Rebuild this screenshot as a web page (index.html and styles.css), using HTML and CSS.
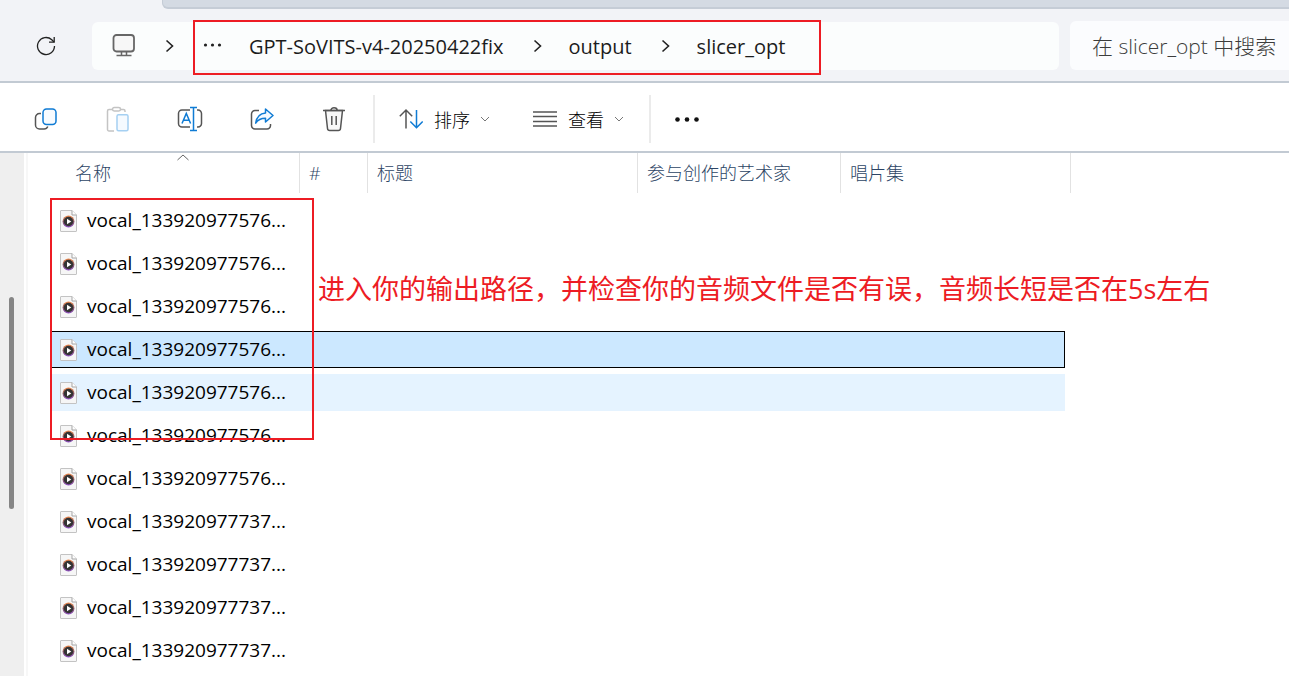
FILE: index.html
```html
<!DOCTYPE html>
<html lang="zh-CN">

<head>
    <meta charset="UTF-8">
    <meta name="viewport" content="width=device-width, initial-scale=1.0">
    <title>slicer_opt</title>
    <link rel="stylesheet" href="styles.css">
</head>

<body>
    <svg class="defs" aria-hidden="true">
        <defs>
            <linearGradient id="ring" x1="0" y1="0" x2="0" y2="1">
                <stop offset="0" stop-color="#f08a4b" />
                <stop offset="0.5" stop-color="#8a5a66" />
                <stop offset="1" stop-color="#8a4fc0" />
            </linearGradient>
            <symbol id="file" viewBox="0 0 17 22">
                <path d="M1 .5h11l4.500 4.500V21a.5.5 0 0 1-.5.5H1a.5.5 0 0 1-.5-.5V1A.5.5 0 0 1 1 .5z" fill="#f6f6f6" stroke="#c3c3c3" />
                <path d="M12 .5V5h4.500" fill="#fff" stroke="#a5a5a5" />
                <circle cx="8.500" cy="11.500" r="5.900" fill="url(#ring)" />
                <circle cx="8.500" cy="11.500" r="4.700" fill="#333" />
                <path d="M7 8.800v5.400l4.300-2.700z" fill="#fff" />
            </symbol>
            <symbol id="next" viewBox="0 0 9 14">
                <path d="M1.500 1.500L7.500 7l-6 5.500" fill="none" stroke="#222" stroke-width="1.600" />
            </symbol>
            <symbol id="down" viewBox="0 0 12 12">
                <path d="M2 4l4 4 4-4" fill="none" stroke="#777" />
            </symbol>
        </defs>
    </svg>

    <div class="tabs">
        <div class="tabs-rest"></div>
    </div>

    <header class="nav">
        <button class="refresh" aria-label="刷新">
            <svg width="20" height="20" viewBox="0 0 20 20" fill="none" stroke="#222" stroke-width="1.300">
                <path d="M18.500 10A8.500 8.500 0 1 1 15.800 3.800L18 6" />
                <path d="M18.200 1v5.200H13" />
            </svg>
        </button>
        <nav class="address">
            <svg width="26" height="24" viewBox="0 0 26 24" fill="none" stroke="#666" stroke-width="1.800">
                <rect x="1.500" y="1" width="20.500" height="16.500" rx="3" fill="#f7f7f7" />
                <path d="M9.500 17.500v4M14.500 17.500v4" stroke-width="1.500" />
                <path d="M4.500 21.500h15" stroke-width="1.500" />
            </svg>
            <svg class="next"><use href="#next" /></svg>
            <button class="crumb-more" aria-label="更多">
                <svg width="21" height="6" viewBox="0 0 21 6" fill="#222">
                    <circle cx="4.500" cy="2" r="1.600" />
                    <circle cx="11.500" cy="2" r="1.600" />
                    <circle cx="18.500" cy="2" r="1.600" />
                </svg>
            </button>
            <a href="#">GPT-SoVITS-v4-20250422fix</a>
            <svg class="next"><use href="#next" /></svg>
            <a href="#">output</a>
            <svg class="next"><use href="#next" /></svg>
            <a href="#">slicer_opt</a>
            <div class="mark mark-path"></div>
        </nav>
        <input class="search" type="text" aria-label="搜索" placeholder="在 slicer_opt 中搜索">
    </header>

    <div class="toolbar">
        <div class="tools">
            <button aria-label="复制">
                <svg width="24" height="24" viewBox="0 0 24 24" fill="none" stroke-width="1.500">
                    <path d="M7 6.500H5.500a4 4 0 0 0-4 4V18a4 4 0 0 0 4 4H10a4 4 0 0 0 3.800-2.500" stroke="#555" />
                    <rect x="9" y="2" width="13" height="15.500" rx="3.500" fill="#f7fbff" stroke="#0f7bd4" />
                </svg>
            </button>
            <button aria-label="粘贴" disabled>
                <svg width="24" height="26" viewBox="0 0 24 26" fill="none" stroke-width="1.500">
                    <path d="M6.500 3.500H3A1.500 1.500 0 0 0 1.500 5v18.500A1.500 1.500 0 0 0 3 25h5M14.500 3.500h3A1.500 1.500 0 0 1 19 5v1" stroke="#c4c4c4" />
                    <rect x="6.500" y="1.500" width="8" height="3.500" rx="1.700" stroke="#c4c4c4" />
                    <rect x="11" y="8.800" width="11" height="16" rx="1.500" fill="#f5faff" stroke="#a5d0f2" />
                </svg>
            </button>
            <button aria-label="重命名">
                <svg width="26" height="26" viewBox="0 0 26 26" fill="none" stroke-width="1.500">
                    <path d="M13 4H5a3.500 3.500 0 0 0-3.500 3.500v10A3.500 3.500 0 0 0 5 21h8M20 4h1a3.500 3.500 0 0 1 3.500 3.500v10A3.500 3.500 0 0 1 21 21h-1" stroke="#555" />
                    <path d="M5 17.500L9.300 7.500l4.300 10M6.500 14.200h5.600" stroke="#0f7bd4" />
                    <path d="M13 1.500h7M13 24.500h7M16.500 1.500v23" stroke="#0f7bd4" />
                </svg>
            </button>
            <button aria-label="共享">
                <svg width="24" height="24" viewBox="0 0 24 24" fill="none" stroke-width="1.500" stroke-linejoin="round">
                    <path d="M9 3.500H5A3.500 3.500 0 0 0 1.500 7v11.500A3.500 3.500 0 0 0 5 22h12a3.500 3.500 0 0 0 3.500-3.500V17" stroke="#555" />
                    <path d="M15.500 2l7.500 6.500-7.500 6.500v-3.800c-4.500 0-7.500 1.300-9.800 5C6.500 10.500 9.500 6.500 15.500 6z" fill="#f3f9ff" stroke="#0f7bd4" />
                </svg>
            </button>
            <button aria-label="删除">
                <svg width="24" height="26" viewBox="0 0 24 26" fill="none" stroke="#555" stroke-width="1.500">
                    <path d="M3.500 4.500l2 18A2.200 2.200 0 0 0 7.700 24.500h8.600a2.200 2.200 0 0 0 2.200-2l2-18z" fill="#f8f8f8" />
                    <path d="M1 4.500h22M8.800 4.500a3.200 2.700 0 0 1 6.400 0M9.800 10v9M14.200 10v9" />
                </svg>
            </button>
        </div>
        <div class="divider"></div>
        <button class="menu">
            <svg width="24" height="22" viewBox="0 0 24 22" fill="none" stroke-width="1.500">
                <path d="M7 20.500V2M.8 8.200L7 2l6.200 6.200" stroke="#555" />
                <path d="M17.500 2v17.500M11.300 13.500l6.200 6.200 6.200-6.200" stroke="#0f7bd4" />
            </svg>
            <span>排序</span>
            <svg class="down"><use href="#down" /></svg>
        </button>
        <button class="menu">
            <svg width="24" height="18" viewBox="0 0 24 18" stroke="#555" stroke-width="1.400">
                <path d="M0 2h24M0 6.500h24M0 11.500h24M0 16h24" />
            </svg>
            <span>查看</span>
            <svg class="down"><use href="#down" /></svg>
        </button>
        <div class="divider"></div>
        <button class="menu" aria-label="查看更多">
            <svg width="24" height="6" viewBox="0 0 24 6" fill="#111">
                <circle cx="2.500" cy="3.500" r="2.300" />
                <circle cx="12" cy="3.500" r="2.300" />
                <circle cx="21.500" cy="3.500" r="2.300" />
            </svg>
        </button>
    </div>

    <main class="content">
        <aside class="side">
            <div class="thumb"></div>
        </aside>
        <section class="files">
            <table>
                <colgroup>
                    <col class="c-name">
                    <col class="c-num">
                    <col class="c-title">
                    <col class="c-artist">
                    <col class="c-album">
                </colgroup>
                <thead>
                    <tr>
                        <th class="first">
                            <div>名称</div>
                            <svg class="sorted" width="12" height="7" viewBox="0 0 12 7" fill="none" stroke="#666">
                                <path d="M.5 6L6 1l5.500 5" />
                            </svg>
                        </th>
                        <th><div>#</div></th>
                        <th><div>标题</div></th>
                        <th><div>参与创作的艺术家</div></th>
                        <th><div>唱片集</div></th>
                    </tr>
                </thead>
                <tbody>
                    <tr><td><div class="name"><svg><use href="#file" /></svg>vocal_133920977576...</div></td><td></td><td></td><td></td><td></td></tr>
                    <tr><td><div class="name"><svg><use href="#file" /></svg>vocal_133920977576...</div></td><td></td><td></td><td></td><td></td></tr>
                    <tr><td><div class="name"><svg><use href="#file" /></svg>vocal_133920977576...</div></td><td></td><td></td><td></td><td></td></tr>
                    <tr class="selected"><td><div class="name"><svg><use href="#file" /></svg>vocal_133920977576...</div></td><td></td><td></td><td></td><td></td></tr>
                    <tr class="hovered"><td><div class="name"><svg><use href="#file" /></svg>vocal_133920977576...</div></td><td></td><td></td><td></td><td></td></tr>
                    <tr><td><div class="name"><svg><use href="#file" /></svg>vocal_133920977576...</div></td><td></td><td></td><td></td><td></td></tr>
                    <tr><td><div class="name"><svg><use href="#file" /></svg>vocal_133920977576...</div></td><td></td><td></td><td></td><td></td></tr>
                    <tr><td><div class="name"><svg><use href="#file" /></svg>vocal_133920977737...</div></td><td></td><td></td><td></td><td></td></tr>
                    <tr><td><div class="name"><svg><use href="#file" /></svg>vocal_133920977737...</div></td><td></td><td></td><td></td><td></td></tr>
                    <tr><td><div class="name"><svg><use href="#file" /></svg>vocal_133920977737...</div></td><td></td><td></td><td></td><td></td></tr>
                    <tr><td><div class="name"><svg><use href="#file" /></svg>vocal_133920977737...</div></td><td></td><td></td><td></td><td></td></tr>
                </tbody>
            </table>
            <div class="mark mark-files"></div>
            <p class="note">进入你的输出路径，并检查你的音频文件是否有误，音频长短是否在5s左右</p>
        </section>
    </main>
</body>

</html>
```
FILE: styles.css
```css
* {
    box-sizing: border-box;
}

body {
    margin: 0;
    min-height: 100vh;
    padding-bottom: 8px;
    display: flex;
    flex-direction: column;
    overflow: hidden;
    background-color: #fff;
    color: #111;
    font-family: "Open Sans", "Noto Sans CJK SC", sans-serif;
    font-size: 18px;
}

button {
    display: flex;
    align-items: center;
    justify-content: center;
    padding: 0;
    border: none;
    background: none;
    color: inherit;
    font: inherit;
}

svg {
    display: block;
    flex-shrink: 0;
}

.defs {
    position: absolute;
    width: 0;
    height: 0;
}

/* top of the window */
.tabs {
    padding-left: 162px;
    background-color: #f2f3f7;
}

.tabs-rest {
    height: 9px;
    background-color: #d4dae3;
    border-left: 1px solid #c5ccd6;
    border-bottom: 2px solid #c5ccd6;
    border-bottom-left-radius: 6px;
}

.nav {
    display: flex;
    height: 74px;
    padding: 12px 0 11px;
    background-color: #f2f3f7;
    border-bottom: 2px solid #c2cad3;
}

.refresh {
    width: 92px;
}

.address {
    position: relative;
    flex: 1;
    display: flex;
    align-items: center;
    gap: 27px;
    margin: 1px 11px 0 0;
    padding-left: 20px;
    background-color: #fbfdfd;
    border-radius: 6px;
    font-size: 20px;
}

.address a {
    padding-right: 2px;
    color: #1c1c1c;
    text-decoration: none;
}

.next {
    width: 9px;
    height: 14px;
}

.search {
    width: 219px;
    padding: 0 0 0 22px;
    border: none;
    border-radius: 6px 0 0 6px;
    background-color: #fbfcfe;
    font: inherit;
    font-size: 21px;
    font-weight: 300;
}

.search::placeholder {
    color: #3c3c3c;
}

/* commands */
.toolbar {
    display: flex;
    align-items: center;
    height: 70px;
    padding: 4px 0 0 22px;
    border-bottom: 2px solid #c2cad3;
}

.tools {
    display: flex;
    gap: 24px;
    margin-right: 12px;
}

.tools button {
    width: 48px;
    height: 48px;
}

.divider {
    width: 2px;
    height: 48px;
    margin: 0 3px;
    background-color: #ebebeb;
}

.menu {
    height: 48px;
    padding: 0 21px;
    font-weight: 300;
    color: #000;
}

.menu span {
    margin: 0 9px 0 11px;
}

.down {
    width: 12px;
    height: 12px;
}

/* file list */
.content {
    flex: 1;
    display: flex;
}

.side {
    width: 24px;
    padding: 144px 0 0 9px;
    background-color: #efefef;
}

.thumb {
    width: 5px;
    height: 212px;
    border-radius: 3px;
    background-color: #858585;
}

.files {
    position: relative;
    flex: 1;
    margin-left: 2px;
    padding-left: 22px;
    border-left: 2px solid #f7f7f7;
}

table {
    width: 1021px;
    table-layout: fixed;
    border-spacing: 0;
}

.c-name {
    width: 250px;
}

.c-num {
    width: 68px;
}

.c-title {
    width: 270px;
}

.c-artist {
    width: 203px;
}

.c-album {
    width: 230px;
}

th {
    position: relative;
    height: 46px;
    padding: 0;
    vertical-align: top;
    text-align: left;
    font-weight: 300;
    color: #2c4464;
}

th div {
    height: 40px;
    padding-left: 9px;
    border-right: 1px solid #e2e2e2;
    line-height: 40px;
}

th.first div {
    padding-left: 25px;
}

.sorted {
    position: absolute;
    top: 1px;
    left: 127px;
}

td {
    height: 43px;
    padding: 0;
    border: 0 solid transparent;
    border-width: 3px 0;
    background-clip: padding-box;
    color: #000;
    font-size: 19px;
}

td:last-child {
    border-right-width: 6px;
}

.name {
    display: flex;
    align-items: center;
    gap: 10px;
    height: 37px;
    padding-left: 10px;
    line-height: 37px;
    white-space: nowrap;
}

.name svg {
    width: 17px;
    height: 22px;
}

.selected td {
    background-color: #cce8ff;
    box-shadow: inset 0 1px #000, inset 0 -1px #000;
}

.selected td:last-child {
    box-shadow: inset 0 1px #000, inset 0 -1px #000, inset -1px 0 #000;
}

.hovered td {
    background-color: #e5f3ff;
}

/* red marks drawn over the window */
.mark {
    position: absolute;
    border: 2px solid #ed1c24;
    pointer-events: none;
}

.mark-path {
    top: -2px;
    left: 101px;
    width: 628px;
    height: 55px;
}

.mark-files {
    top: 45px;
    left: 22px;
    width: 264px;
    height: 242px;
}

.note {
    position: absolute;
    top: 116px;
    left: 290px;
    margin: 0;
    color: #ed1c24;
    font-size: 27px;
    line-height: 40px;
    white-space: nowrap;
}
```
